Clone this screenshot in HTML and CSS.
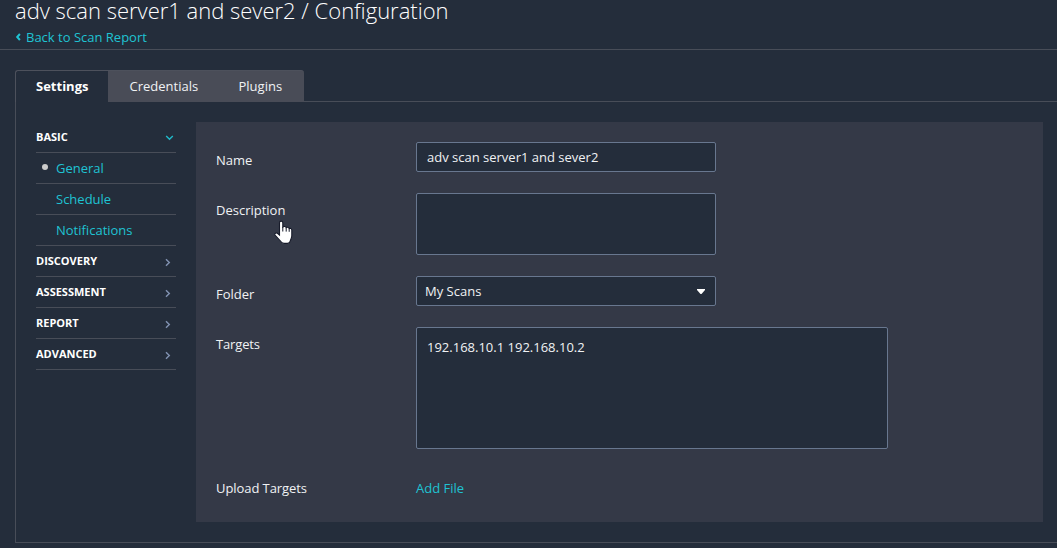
FILE: index.html
```html
<!DOCTYPE html>
<html lang="en">
<head>
<meta charset="utf-8">
<title>Scan Configuration</title>
<link rel="stylesheet" href="styles.css">
</head>
<body>
<header class="header">
  <h1 class="title">adv scan server1 and sever2 / Configuration</h1>
  <a class="back"><svg class="back-icon" width="6" height="8" viewBox="0 0 6 8"><path d="M4.9 1 2.2 4l2.7 3"/></svg>Back to Scan Report</a>
</header>
<nav class="tabs">
  <a class="tab tab-active">Settings</a>
  <a class="tab tab-credentials">Credentials</a>
  <a class="tab tab-plugins">Plugins</a>
</nav>
<main class="content">
  <aside class="sidebar">
    <div class="group">BASIC<svg class="chevron chevron-open" width="9" height="6" viewBox="0 0 9 6"><path d="M1.2 1l3.3 3.3L7.8 1"/></svg></div>
    <a class="item item-current">General</a>
    <a class="item">Schedule</a>
    <a class="item">Notifications</a>
    <div class="group">DISCOVERY<svg class="chevron" width="6" height="9" viewBox="0 0 6 9"><path d="M1 1.2l3.3 3.3L1 7.8"/></svg></div>
    <div class="group">ASSESSMENT<svg class="chevron" width="6" height="9" viewBox="0 0 6 9"><path d="M1 1.2l3.3 3.3L1 7.8"/></svg></div>
    <div class="group">REPORT<svg class="chevron" width="6" height="9" viewBox="0 0 6 9"><path d="M1 1.2l3.3 3.3L1 7.8"/></svg></div>
    <div class="group">ADVANCED<svg class="chevron" width="6" height="9" viewBox="0 0 6 9"><path d="M1 1.2l3.3 3.3L1 7.8"/></svg></div>
  </aside>
  <section class="form">
    <div class="row"><div class="label label-center">Name</div><div class="field">adv scan server1 and sever2</div></div>
    <div class="row"><div class="label">Description</div><div class="field field-description"></div></div>
    <div class="row"><div class="label label-center">Folder</div><div class="field field-select">My Scans<svg width="8" height="5" viewBox="0 0 8 5"><path d="M0 0h8v1L4.5 5h-1L0 1z" fill="#fff"/></svg></div></div>
    <div class="row"><div class="label label-targets">Targets</div><div class="field field-targets">192.168.10.1 192.168.10.2</div></div>
    <div class="row row-upload"><div class="label label-upload">Upload Targets</div><a class="add-file">Add File</a></div>
  </section>
</main>
<svg class="pointer" width="19" height="25" viewBox="0 0 19 25"><path d="M5.5 13V2.8C5.5 .6 8.8 .6 8.8 2.8V7C10 6 12 6.5 12.2 7.6C13.5 6.9 15 7.5 15.2 8.6C16.7 8 17.8 8.7 17.8 10.2V15.5C17.8 18 16.8 18.8 16.2 21.2Q15.7 23.4 13.5 23.4H10C8 23.4 7 22 6 20.5L1 15C.4 13.5 2 12.5 3.4 13.3L5.5 15Z" fill="#fff" stroke="#171b2a" stroke-width="1.1"/><path d="M8.8 7v4.5M12.2 7.6v4M15.2 8.6v3.2" fill="none" stroke="#171b2a" stroke-width="1"/></svg>
</body>
</html>
```
FILE: styles.css
```css
* { box-sizing: border-box; }
html { background: #242d3b; }
body {
  margin: 0;
  height: 548px;
  overflow: hidden;
  background: #242d3b;
  color: #f0f2f4;
  font: 13px/18px "Open Sans", sans-serif;
}
.header { height: 50px; padding-left: 15px; border-bottom: 1px solid #484d58; }
.title {
  margin: 0;
  height: 28px;
  color: #fff;
  font: 300 22px/20px "Open Sans", sans-serif;
}
.back { display: flex; align-items: center; gap: 5px; color: #1fc3d3; }
.back-icon { fill: none; stroke: currentColor; stroke-width: 2; }
.tabs {
  display: flex;
  height: 32px;
  margin: 20px 0 0 15px;
  border-bottom: 1px solid #484d58;
}
.tab {
  height: 32px;
  padding-left: 21.5px;
  border-top: 1px solid #4d515c;
  background: #494c57;
  line-height: 31px;
}
.tab-active {
  width: 93px;
  padding-left: 20px;
  border-left: 1px solid #4d515c;
  border-radius: 3px 0 0 0;
  background: #242d3b;
  color: #fff;
  font-weight: 700;
}
.tab-credentials { width: 109px; }
.tab-plugins { width: 87px; border-radius: 0 3px 0 0; }
.content {
  display: flex;
  height: 441px;
  margin-left: 15px;
  padding: 20px 14px 20px 20px;
  border-left: 1px solid #484d58;
  border-bottom: 1px solid #484d58;
}
.sidebar { width: 140px; margin-right: 20px; }
.group, .item {
  display: flex;
  align-items: center;
  height: 31px;
  border-bottom: 1px solid #484d58;
}
.group {
  justify-content: space-between;
  padding-right: 5px;
  color: #fff;
  font-size: 11px;
  font-weight: 700;
}
.chevron { margin-top: 2px; fill: none; stroke: #8292b2; stroke-width: 1.4; }
.chevron-open { margin-right: -3px; stroke: #20b9ca; }
.item { padding-left: 20px; color: #1fc3d3; }
.item-current { padding-left: 6px; }
.item-current::before {
  content: "";
  width: 6px;
  height: 6px;
  margin: -3px 8px 0 0;
  border-radius: 50%;
  background: #ccc;
}
.form {
  display: flex;
  flex: 1;
  flex-direction: column;
  gap: 21px;
  height: 400px;
  padding: 20px;
  background: #343947;
}
.row { display: flex; }
.label { width: 200px; padding-top: 8px; }
.label-center { padding-top: 9px; }
.label-targets { letter-spacing: -0.15px; }
.field {
  width: 300px;
  height: 30px;
  padding: 0 10px;
  border: 1px solid #68778f;
  border-radius: 2px;
  background: #242d3b;
  line-height: 28px;
}
.field-description { height: 62px; }
.field-select {
  display: flex;
  align-items: center;
  justify-content: space-between;
  padding-left: 8px;
}
.field-targets { width: 472px; height: 122px; padding-top: 10px; line-height: 18px; }
.row-upload { padding-top: 9px; }
.label-upload { padding-top: 0; letter-spacing: -0.07px; }
.add-file { color: #1fc3d3; }
.pointer { position: absolute; left: 274px; top: 220px; }
```
